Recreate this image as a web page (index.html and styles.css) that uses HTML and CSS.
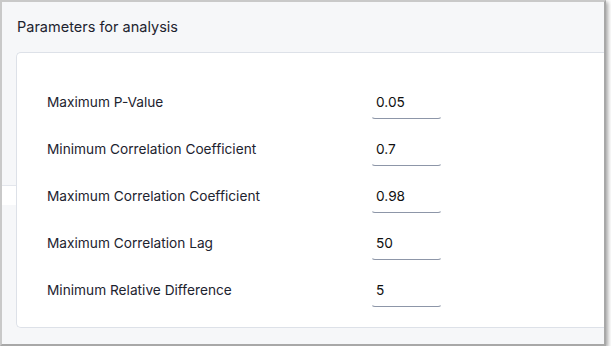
FILE: index.html
```html
<!DOCTYPE html>
<html>
<head>
<meta charset="utf-8">
<link rel="stylesheet" href="styles.css">
</head>
<body>
<div class="window">
  <div class="header">Parameters for analysis</div>
  <div class="card">
    <div class="row"><span class="label">Maximum P-Value</span><div class="input">0.05</div></div>
    <div class="row"><span class="label">Minimum Correlation Coefficient</span><div class="input">0.7</div></div>
    <div class="row"><span class="label">Maximum Correlation Coefficient</span><div class="input">0.98</div></div>
    <div class="row"><span class="label">Maximum Correlation Lag</span><div class="input">50</div></div>
    <div class="row"><span class="label">Minimum Relative Difference</span><div class="input">5</div></div>
  </div>
</div>
</body>
</html>
```
FILE: styles.css
```css
html, body { margin: 0; padding: 0; background: #fff; }
body { font-family: Inter, "Noto Sans", sans-serif; color: #1d232f; }
.window {
  box-sizing: border-box;
  width: 606px;
  height: 346px;
  border-top: 2px solid #c9c9c9;
  border-left: 2px solid #c9c9c9;
  border-right: 2px solid #a8a8a8;
  border-bottom: 2px solid #a8a8a8;
  box-shadow: 2px 2px 4px rgba(0,0,0,0.35);
  background: linear-gradient(to bottom, #f6f7f9 0 183px, #e3e6ec 183px 184px, #ffffff 184px 203px, #f6f7f9 203px);
  display: flex;
  flex-direction: column;
  overflow: hidden;
}
.header {
  height: 50px;
  flex: none;
  box-sizing: border-box;
  padding: 16px 0 0 15px;
  font-size: 14.5px;
  line-height: 17px;
  color: #1d232f;
}
.card {
  margin-left: 14px;
  height: 276px;
  box-sizing: border-box;
  background: #fff;
  border: 1px solid #dde1e8;
  border-right: none;
  border-radius: 5px 0 0 5px;
  padding: 33px 0 0 30px;
  display: flex;
  flex-direction: column;
  gap: 15px;
}
.row {
  display: flex;
  align-items: center;
  height: 32px;
}
.label {
  width: 324px;
  font-size: 13.7px;
}
.input {
  box-sizing: border-box;
  width: 71px;
  height: 34px;
  padding: 0 4px;
  display: flex;
  align-items: center;
  font-size: 13.7px;
  color: #111;
  border: 1px solid transparent;
  border-top: none;
  border-bottom: 1px solid #8d96a8;
  border-radius: 0 0 4px 4px;
}
```
